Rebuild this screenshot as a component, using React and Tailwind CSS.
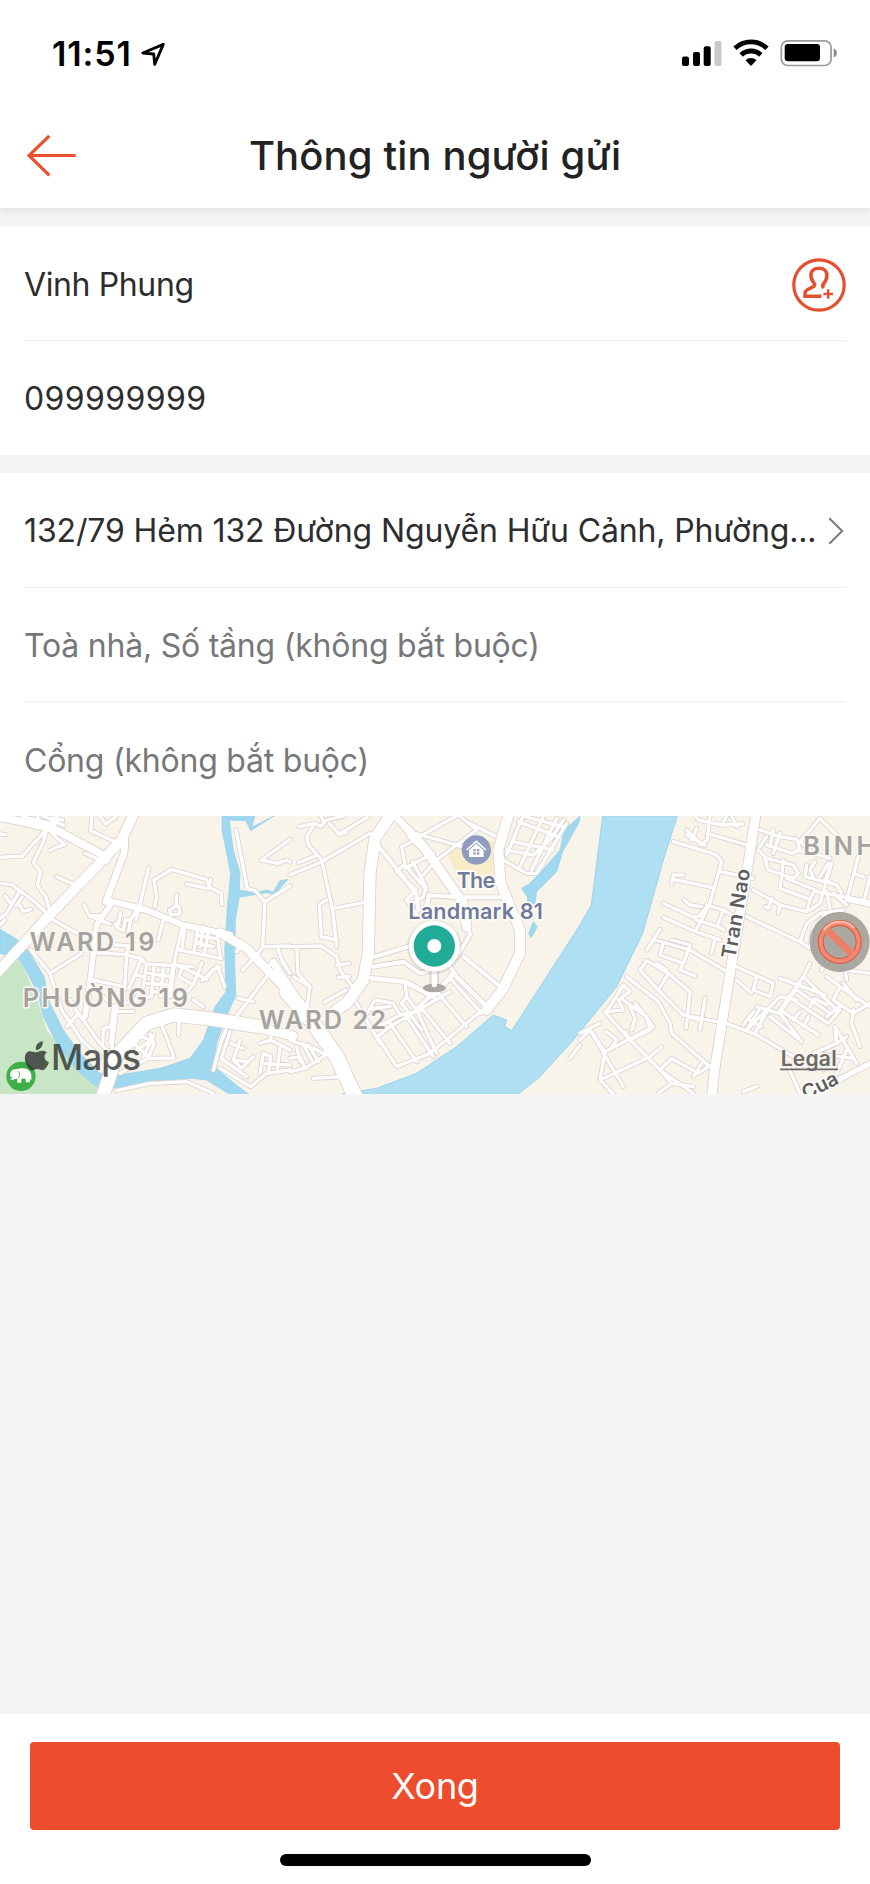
// Road geometry, grouped by map tile. Each tile is 870 units wide.
// Entries are [width, path].
const WEST = [
  [10, "M0 142L68 138L92 110L140 58M140 58L170 20M68 18L150 50M150 50L172 64M172 18L150 58L165 80L195 104L168 112L150 122M130 95L100 158L122 185L112 225L138 262L146 292M140 58L130 95"],
  [10, "M0 72L18 74M112 18L122 52M95 26L165 44M130 18L190 46M155 24L188 30M0 220L35 224L95 268L140 310M15 258L35 284L20 310L0 325M35 284L55 250M55 280L70 304L92 298M66 262L48 288M0 345L14 330"],
  [10, "M170 200L218 222M255 130L300 150M276 18L272 62L360 102M300 18L318 42L350 18M380 110L352 98M446 174L408 330M464 290L470 262L462 210L515 178L618 208L632 234L664 250L666 284M560 222L625 236L632 208"],
  [10, "M530 254L528 288L508 300L512 314L540 312L538 292L528 288M252 284L268 318L330 342M160 330L235 372M268 318L300 316M362 308L352 354L370 362L376 330L392 330L384 374M352 354L345 340M392 330L410 300M490 330L474 390"],
  [10, "M548 345L524 450L512 560M540 420L665 446M555 348L545 420M594 356L582 424M625 370L612 432M652 378L662 446M594 375L645 386M586 398L640 410M610 350L600 410"],
  [10, "M340 404L385 408M280 428L380 434L374 540M385 410L378 440M374 434L425 446L438 462L580 470M440 462L430 530M462 470L454 560M490 476L482 560M518 475L506 560M446 490L512 500M442 520L508 525M430 500L405 494L386 536M425 446L402 500M455 545L512 548"],
  [10, "M522 462L548 472L620 508M548 472L536 500L580 524L565 540M580 524L606 458M606 512L640 478L655 474L674 530M640 478L618 508M660 472L650 468M580 570L610 590"],
  [10, "M92 420L150 490L185 600L245 690L300 740M150 490L245 430M200 650L235 610L300 700L320 720M235 610L210 570M270 508L370 530M300 550L340 590L450 560M340 600L332 650L310 655L308 705M332 700L336 640M345 605L400 604M350 590L335 720M400 580L430 530"],
  [10, "M485 645L520 735M450 672L462 700L445 745L360 790M445 745L522 744M390 690L450 745M420 680L455 690L410 720M462 675L430 740M537 625L536 675M350 842L450 820L560 815L640 850"],
  [10, "M708 60L742 236L765 242L795 275L870 228M795 275L788 410L870 408M870 88L784 150L832 160L860 150L870 156M788 410L770 434M775 430L728 480M720 408L710 425M832 410L845 450L870 490M822 450L800 475M800 500L705 625M715 565L760 575M640 780L665 690L678 660M660 775L752 830L800 790L870 780"],
  [10, "M690 665L664 745L740 800M692 700L730 715M720 690L700 750L745 755M700 750L725 775L760 740M815 670L812 690L780 700M812 690L870 720M812 740L805 790M840 715L832 775M790 760L870 765M780 790L790 730L812 740"],
  [23, "M0 22L90 40L172 62L300 130L318 150"],
  [18, "M318 270L440 300L548 345L690 375"],
  [16, "M338 275L290 345L272 500L255 620"],
  [20, "M375 95L372 130L318 275"],
  [30, "M402 10L365 90L130 335L72 400L-20 500"],
  [26, "M660 368L740 415L800 478L870 550"],
  [22, "M820 458L880 550"],
  [40, "M308 860L350 735L440 640L520 615L620 625L780 650"],
  [26, "M700 637L880 678"],
];

const CENTRAL = [
  [10, "M28 50L75 40L92 50L110 30L160 18M75 40L50 80L55 105L95 150L128 300L140 410M0 195L95 155L240 70M25 158L75 138M118 40L148 72L235 20M92 18L100 32M150 72L170 68"],
  [10, "M128 296L220 278M110 270L88 282L94 380L140 390M20 410L24 490L60 530L50 600M60 530L10 500M0 410L95 408L140 440L150 480L195 540M140 465L178 460M145 502L178 500M104 576L168 540"],
  [10, "M322 18L375 70L552 120M380 85L455 42M455 42L500 18M335 110L380 88M335 110L345 165L410 240M345 160L320 185L378 240L350 270L385 320M400 195L440 150M345 175L430 130M368 155L408 230L400 260L370 280M440 150L560 60L500 10M540 40L615 78"],
  [12, "M268 112L345 208L380 255L385 300M412 290L416 256L520 262L640 262M520 262L530 340M412 275L400 310"],
  [12, "M255 440L370 405M250 470L340 455L390 490L430 480L500 440L540 375L530 330M370 405L410 470M520 440L625 525M480 470L495 490"],
  [14, "M245 505L345 515L430 560L490 490L590 590"],
  [10, "M345 515L350 560L380 600L430 545M380 600L440 730M350 560L335 580L395 660M490 490L440 545L385 590M440 545L530 650M480 505L575 610M395 595L480 700M350 620L430 740M300 640L380 755M262 680L300 650L480 545M262 680L320 770L420 730L590 590M200 580L270 700M225 620L255 570L310 580L330 615L265 650M245 595L300 590M330 615L400 600"],
  [10, "M650 120L730 135L780 90L820 30M668 95L790 120M640 150L710 190L740 190L830 40M685 35L805 80M705 20L820 50M690 170L760 20M650 135L700 15M725 180L800 25"],
  [10, "M0 745L30 740L45 775L100 740M38 700L65 750M55 705L85 755M20 710L30 755M0 785L45 775M70 805L160 800M0 690L70 715L110 735M840 745L870 705"],
  [28, "M365 75L400 110L520 280L530 350"],
  [20, "M365 75L322 25"],
  [34, "M300 18L255 85L240 190L235 430L220 510L170 580L140 600"],
  [30, "M655 18L625 120L632 220L690 360L690 430L640 535L590 600"],
  [44, "M-10 545L70 640L140 740L200 870"],
];

const EAST = [
  [10, "M345 18L355 30L425 45L440 18M425 45L488 42M390 18L382 88L365 105L320 60M382 70L500 105M320 75L375 105M350 55L335 90M455 18L470 50"],
  [10, "M280 95L408 134L425 155L388 285L348 360M420 185L520 205M275 222L280 195L310 195M280 208L395 232M250 280L340 322L358 318L380 290M250 322L340 362L405 385L395 430M312 270L330 285L365 290M380 285L430 300L415 340M430 300L480 330M348 330L415 350L432 360M405 385L420 390"],
  [10, "M240 358L200 420M225 390L330 420L450 490M250 400L240 435L310 460L330 405M275 390L330 405M310 460L300 480M300 480L345 498M180 480L200 452L265 490L330 545L325 600L318 655M180 480L235 540L310 615L435 640M265 490L235 540M140 500L235 575L270 640L275 670L390 770M375 565L360 660M310 615L355 630M230 460L260 480"],
  [10, "M80 605L130 525L150 545L115 570L130 600L80 605M130 570L200 620L210 660L150 690L135 665M150 590L165 625L155 660M165 580L220 650L75 725M75 605L150 690L240 780L340 850M0 670L60 640M30 660L130 830M30 660L75 725L60 810L100 852M60 810L210 740L245 710M80 665L110 690L95 710M240 780L275 745L355 790L385 770M240 780L275 820L340 830M340 800L365 760M275 820L235 850M490 845L530 830M0 690L30 660"],
  [10, "M540 60L600 80L650 88L660 120L635 130L560 105M580 60L570 110M600 70L580 130M560 80L540 110M535 120L560 145L640 165L655 190L640 205L565 180L555 145M610 150L605 200L600 235L690 268L705 240L620 205M650 120L700 130L660 95L720 25L770 75M700 130L750 145M680 165L675 200L770 225M700 200L690 180L705 155M770 225L735 210L755 160L720 280L690 300M690 268L680 305L600 285L520 240M600 285L595 310M575 265L565 295L555 290M770 225L785 250"],
  [10, "M500 320L660 395L690 415L700 350L740 310M660 395L680 340L720 310L790 300M745 160L720 200M835 140L800 270L870 285M820 190L850 200M870 200L850 280M710 245L870 275M740 245L750 295M760 250L800 285M690 460L670 500L600 600M725 480L745 450M800 510L795 480L870 490M600 505L735 555M670 500L770 600"],
  [10, "M470 470L580 520L570 560L520 540L530 500M470 510L515 550M490 645L520 605M530 590L600 610L660 520M540 595L500 660L600 560L650 570M600 610L665 695M570 620L660 690M560 605L525 670M510 630L545 650M600 600L715 675M640 630L660 605M670 650L685 620M625 560L745 640L780 600M690 590L705 565L740 585M650 540L750 610M740 500L780 530L870 590M780 530L760 570L820 610L870 580M820 600L815 640L840 710M740 620L780 590M790 520L830 570"],
  [10, "M620 760L660 850M700 730L770 700L765 650L830 760M770 700L800 680M700 730L820 745M740 740L730 780M800 720L770 790M440 640L530 675L650 745"],
  [16, "M775 810L880 755"],
  [28, "M528 10L492 240L450 490L405 770L395 860"],
];

const TILES = [WEST, CENTRAL, EAST];

function Roads() {
  return (
    <g fill="none" strokeLinecap="round" strokeLinejoin="round">
      <g stroke="#dbd2ce">
        {TILES.map((roads, t) => (
          <g key={t} transform={`translate(${t * 870} 0)`}>
            {roads.map(([w, d], i) => <path key={i} d={d} strokeWidth={w + 5} />)}
          </g>
        ))}
      </g>
      <g stroke="#ffffff">
        {TILES.map((roads, t) => (
          <g key={t} transform={`translate(${t * 870} 0)`}>
            {roads.map(([w, d], i) => <path key={i} d={d} strokeWidth={w} />)}
          </g>
        ))}
      </g>
    </g>
  );
}

function Water() {
  return (
    <g>
      <path d="M0 460L60 450L110 560L140 660L220 760L300 830L290 852H0Z" fill="#c8e6c6" />
      <g fill="#a0d9ef" stroke="#94cfe8" strokeWidth="2">
        <path d="M0 357L62 395L90 430L132 500L150 580L190 660L240 730L300 790L370 793L480 775L570 745L610 690L645 590L678 545L674 420L682 290L692 190L666 60V16H765L755 52L825 16L752 62L738 32L688 30L700 120L720 190L718 240L760 248L800 240L820 246L840 212L864 208L825 252L798 248L718 262L706 330L704 470L708 555L675 630L650 700L640 765L690 810L745 852L700 860L620 810L570 805L470 815L360 835L290 830L230 780L170 700L130 620L112 545L60 450L0 430Z" />
        <path d="M1740 18L1692 60L1680 120L1650 155L1590 220L1565 235L1582 260L1584 290L1605 280L1610 245L1670 185L1688 125L1738 36ZM1600 335L1612 350L1593 384L1586 370Z" />
      </g>
      <path d="M1025 852L1130 835L1250 790L1370 710L1480 615L1520 630L1514 648L1535 662L1740 345L1774 285L1808 18H2032L1990 150L1928 370L1850 530L1720 690L1620 800L1555 852Z" fill="#aedff3" stroke="#9dd3ea" strokeWidth="3" />
    </g>
  );
}

function MapView() {
  return (
    <svg className="block h-[278px] w-full" viewBox="0 18 2610 834" preserveAspectRatio="none" fontFamily="Inter, 'Liberation Sans', sans-serif">
      <rect width="2610" height="870" fill="#f8f4ea" />
      <path d="M1340 130L1410 75L1485 95L1480 200H1375Z" fill="#f8edc8" />
      <Water />
      <Roads />

      <g fill="#a5a39e" stroke="#f9f7f1" strokeWidth="9" strokeLinejoin="round" paintOrder="stroke" fontSize="76" fontWeight="600">
        <text x="89" y="424" textLength="374">WARD 19</text>
        <text x="68" y="591" textLength="496">PHƯỜNG 19</text>
        <text x="776" y="658" textLength="382">WARD 22</text>
        <text x="2410" y="136" textLength="216">BINH</text>
      </g>

      <g fill="#717a9c" stroke="#fffdf8" strokeWidth="10" strokeLinejoin="round" paintOrder="stroke" fontSize="65" fontWeight="600" textAnchor="middle">
        <text x="1428" y="235" textLength="116">The</text>
        <text x="1427" y="326" textLength="404">Landmark 81</text>
      </g>
      <g transform="translate(1429 120)">
        <circle r="44" fill="#929cc0" />
        <path d="M-29 0L0 -26L29 0" fill="none" stroke="#fff" strokeWidth="5" />
        <path d="M-22 1L0 -19L22 1V21H-22Z" fill="#fff" />
        <path d="M-9 -3h7v7h-7zM2 -3h7v7h-7zM-9 7h7v7h-7zM2 7h7v7h-7z" fill="#929cc0" />
      </g>

      <g transform="translate(1303 408)">
        <ellipse cx="0" cy="126" rx="35" ry="13" fill="#aaa8a4" />
        <rect x="-15" y="60" width="30" height="58" rx="7" fill="#000" opacity=".09" />
        <rect x="-8" y="60" width="16" height="64" rx="7" fill="#fff" />
        <circle cy="3" r="84" fill="#000" opacity=".04" />
        <circle cy="3" r="80" fill="#000" opacity=".06" />
        <circle r="76" fill="#fff" />
        <circle r="62" fill="#22ab97" />
        <circle r="21" fill="#fff" />
      </g>

      <text transform="translate(2206 448) rotate(-80.5)" fontSize="60" fontWeight="600" fill="#5f5e5e" stroke="#fff" strokeWidth="8" paintOrder="stroke" strokeLinejoin="round" textLength="272">Tran Nao</text>
      <text transform="translate(2418 871) rotate(-27)" fontSize="60" fontWeight="600" fill="#5f5e5e" stroke="#fff" strokeWidth="8" paintOrder="stroke" strokeLinejoin="round" textLength="114">Cua</text>

      <g transform="translate(2519 396)">
        <circle r="90" fill="#85837f" opacity=".68" />
        <circle r="57" fill="none" stroke="#d95843" strokeWidth="18" />
        <path d="M-42 -40L42 40" stroke="#ee8068" strokeWidth="22" />
        <circle r="57" fill="none" stroke="#f58a72" strokeWidth="12" />
        <path d="M-48 -36A60 60 0 0 1 44 -42" fill="none" stroke="#fac1b1" strokeWidth="6" />
      </g>

      <g fill="#6b6a68" stroke="#f9f7f1" strokeWidth="4" paintOrder="stroke">
        <text x="2342" y="769" fontSize="63" fontWeight="600" textLength="168">Legal</text>
        <path d="M2340 778H2514" stroke="#6b6a68" strokeWidth="5" />
      </g>

      <g transform="translate(63 799)">
        <circle r="44" fill="#3eae49" />
        <path d="M-33 0C-33 -16 -26 -23 -15 -21C-2 -26 21 -27 28 -13C33 -5 30 5 32 12L27 7L26 18H14V7H1V19H-11V7L-19 8C-25 13 -31 12 -33 6L-28 7C-24 4 -29 2 -33 0Z" fill="#fff" />
        <path d="M-10 -16C-3 -10 -2 0 -9 5" fill="none" stroke="#3eae49" strokeWidth="3" />
      </g>
      <g fill="#2d302d" opacity=".78">
        <path d="M139 727C128 717 115 727 108 727C100 727 90 719 80 728C68 742 77 767 91 779C99 784 104 777 112 777C120 777 126 784 134 778C141 771 145 763 147 757C129 750 130 732 143 726ZM108 721C105 706 115 696 128 694C130 708 120 720 108 721Z" />
        <text x="153" y="779" fontSize="106" fontWeight="500" textLength="270">Maps</text>
      </g>
    </svg>
  );
}

function StatusBar() {
  return (
    <div className="flex h-[104px] items-start justify-between pt-[36px] pr-[32px] pl-[52px]">
      <div className="flex items-center gap-[9px] text-black">
        <span className="text-[34px] leading-[36px] font-semibold tracking-[0.9px]">11:51</span>
        <svg className="h-[26px] w-[25px]" viewBox="0 0 25 26" fill="none" stroke="#000" strokeWidth="2.8" strokeLinejoin="round">
          <path d="M22.3 3.4L1.8 12L12.7 13L13.7 23.4Z" />
        </svg>
      </div>
      <svg className="mt-[3px] h-[30px] w-[156px]" viewBox="0 0 156 30">
        <rect x="0" y="17.5" width="7" height="9.5" rx="2" />
        <rect x="11" y="13" width="7" height="14" rx="2" />
        <rect x="21.7" y="7.3" width="7" height="19.7" rx="2" />
        <rect x="32.5" y="2" width="7" height="25" rx="2" fill="#c9c9c9" />
        <g fill="none" stroke="#000" strokeWidth="4.8">
          <path d="M53 9.3A23.2 23.2 0 0 1 85 9.3" />
          <path d="M59.2 15.9A14.2 14.2 0 0 1 78.8 15.9" />
        </g>
        <path d="M69 27L63.5 21.3A8 8 0 0 1 74.5 21.3Z" />
        <rect x="99.3" y="1.8" width="49.8" height="24.7" rx="6.5" fill="none" stroke="#9b9b9b" strokeWidth="1.7" />
        <rect x="102.7" y="5" width="35.3" height="17.3" rx="3.2" />
        <path d="M151.7 9.6C156 11.2 156 17 151.7 18.6Z" fill="#8c8c8c" />
      </svg>
    </div>
  );
}

// One row of the form; className carries its height, divider and letter spacing.
function Field({ children, className, action }) {
  return (
    <div className={"mx-6 flex items-center justify-between pt-[2px] " + className}>
      <span className="whitespace-nowrap">{children}</span>
      {action}
    </div>
  );
}

export default function App() {
  return (
    <div className="flex h-[1884px] w-[870px] flex-col bg-[#f4f4f4] font-['Inter','Liberation_Sans',sans-serif]">
      <header className="z-10 h-[208px] shrink-0 bg-white shadow-[0_2px_8px_rgba(0,0,0,0.09)]">
        <StatusBar />
        <div className="grid h-[104px] grid-cols-[1fr_auto_1fr] items-center px-[27px]">
          <svg className="h-[42px] w-[50px]" viewBox="0 0 50 42" fill="none" stroke="#e8502f" strokeWidth="3.2">
            <path d="M22.3 .9L2 20.5L22.3 40.3M2 20.5H48.7" />
          </svg>
          <h1 className="text-[40px] leading-[50px] font-medium tracking-[0.13px] text-[#222]">Thông tin người gửi</h1>
        </div>
      </header>

      <section className="mt-[19px] shrink-0 bg-white text-[32px] text-[#2d2d2d]">
        <Field
          className="h-[114px] border-b border-[#ededed] tracking-[-0.38px]"
          action={
            <svg className="h-[54px] w-[54px]" viewBox="0 0 54 54" fill="none" stroke="#e4502f" strokeWidth="3.2">
              <circle cx="27" cy="27" r="25.2" />
              <path strokeWidth="3.5" d="M29.5 38.3H13V35C13 31.5 17.5 30.6 20.5 29.2C22.7 28.2 23.5 26.6 21.7 24.6C19.7 22.3 18.9 19.8 18.9 17.1C18.9 12.7 22.3 10.2 26.9 10.2C31.5 10.2 34.9 12.7 34.9 17.1C34.9 20.8 33.7 23.4 31.8 25.5C30.3 27.2 30.4 28.6 31.8 30" />
              <path d="M31.5 36H41M36.2 31.3V40.8" strokeWidth="2.4" />
            </svg>
          }
        >
          Vinh Phung
        </Field>
        <Field className="h-[114px] tracking-[0.4px]">099999999</Field>
      </section>

      <section className="mt-[18px] shrink-0 bg-white text-[32px] text-[#2d2d2d]">
        <Field
          className="h-[115px] border-b border-[#ececec] tracking-[-0.13px]"
          action={
            <svg className="mr-[2px] h-[28px] w-[16px]" viewBox="0 0 16 28" fill="none" stroke="#7b7b7b" strokeWidth="2">
              <path d="M1.3 1.2L14.2 14L1.3 26.8" />
            </svg>
          }
        >
          132/79 Hẻm 132 Đường Nguyễn Hữu Cảnh, Phường...
        </Field>
        <Field className="h-[115px] border-b-2 border-[#f5f5f5] tracking-[-0.22px] text-[#77777a]">Toà nhà, Số tầng (không bắt buộc)</Field>
        <Field className="h-[113px] tracking-[-0.22px] text-[#77777a]">Cổng (không bắt buộc)</Field>
      </section>

      <div className="h-[278px] shrink-0 overflow-hidden">
        <MapView />
      </div>

      <footer className="mt-auto flex h-[170.5px] shrink-0 flex-col items-center bg-white px-[30px] pt-[28.5px]">
        <button className="h-[87.5px] w-full rounded-[4px] bg-[#ee4d2d] text-[36px] tracking-[-0.3px] text-white">Xong</button>
        <div className="mt-[24px] h-[12px] w-[311px] rounded-full bg-black" />
      </footer>
    </div>
  );
}
